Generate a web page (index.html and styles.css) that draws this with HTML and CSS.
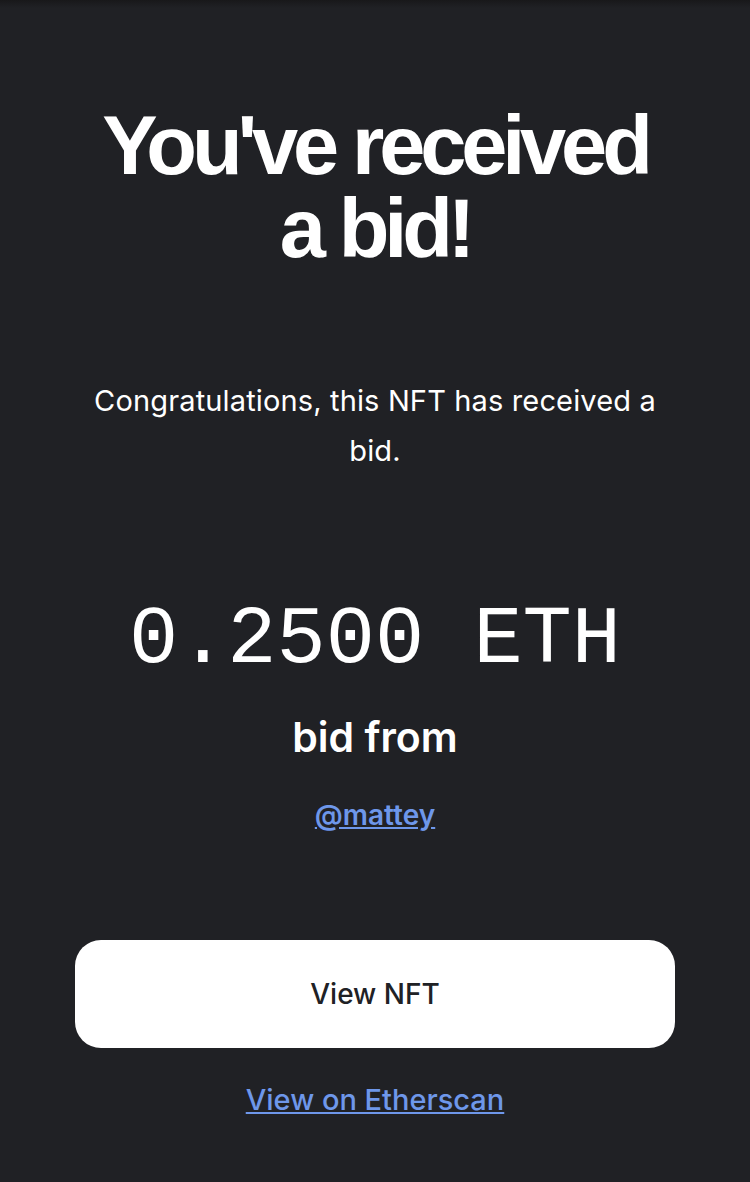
FILE: index.html
```html
<!DOCTYPE html>
<html lang="en">
<head>
    <meta charset="UTF-8">
    <meta name="viewport" content="width=device-width, initial-scale=1.0">
    <title>Bid received</title>
    <link rel="stylesheet" href="styles.css">
</head>
<body>
    <div class="topbar"></div>
    <div class="container">
        <h1 class="title">You've received a bid!</h1>
        <p class="message">Congratulations, this NFT has received a bid.</p>

        <div class="amount">0.2500 ETH</div>
        <div class="from">bid from</div>
        <a class="user" href="#">@mattey</a>

        <a class="button" href="#">View NFT</a>
        <a class="link" href="#">View on Etherscan</a>
    </div>
</body>
</html>
```

FILE: styles.css
```css
body {
    font-family: Inter, "Noto Sans", sans-serif;
    margin: 0;
    background-color: #202125;
    color: #ffffff;
    min-height: 100vh;
}
.topbar {
    height: 8px;
    background: linear-gradient(#18181a, #202125);
}
.container {
    display: flex;
    flex-direction: column;
    align-items: center;
    text-align: center;
    padding: 0 75px;
}
.title {
    margin: 96px 0 0;
    font-family: "Liberation Sans", Arial, sans-serif;
    font-size: 83px;
    font-weight: 700;
    line-height: 83px;
    letter-spacing: -0.062em;
    width: 580px;
}
.message {
    margin: 106px 0 0;
    font-size: 29px;
    line-height: 50px;
    letter-spacing: 0.005em;
    width: 600px;
}
.amount {
    margin-top: 120px;
    font-family: "Liberation Mono", "Courier New", monospace;
    font-size: 82px;
    line-height: 90px;
}
.from {
    margin-top: 26px;
    font-size: 41px;
    font-weight: 600;
    line-height: 50px;
}
.user {
    margin-top: 33px;
    font-size: 28px;
    font-weight: 600;
    color: #6e97ea;
    line-height: 40px;
}
.button {
    margin-top: 105px;
    width: 100%;
    height: 108px;
    display: flex;
    align-items: center;
    justify-content: center;
    background: #ffffff;
    color: #202125;
    border-radius: 26px;
    font-size: 28px;
    font-weight: 500;
    text-decoration: none;
}
.link {
    margin-top: 32px;
    font-size: 29px;
    font-weight: 500;
    color: #6e97ea;
    line-height: 40px;
}
```
